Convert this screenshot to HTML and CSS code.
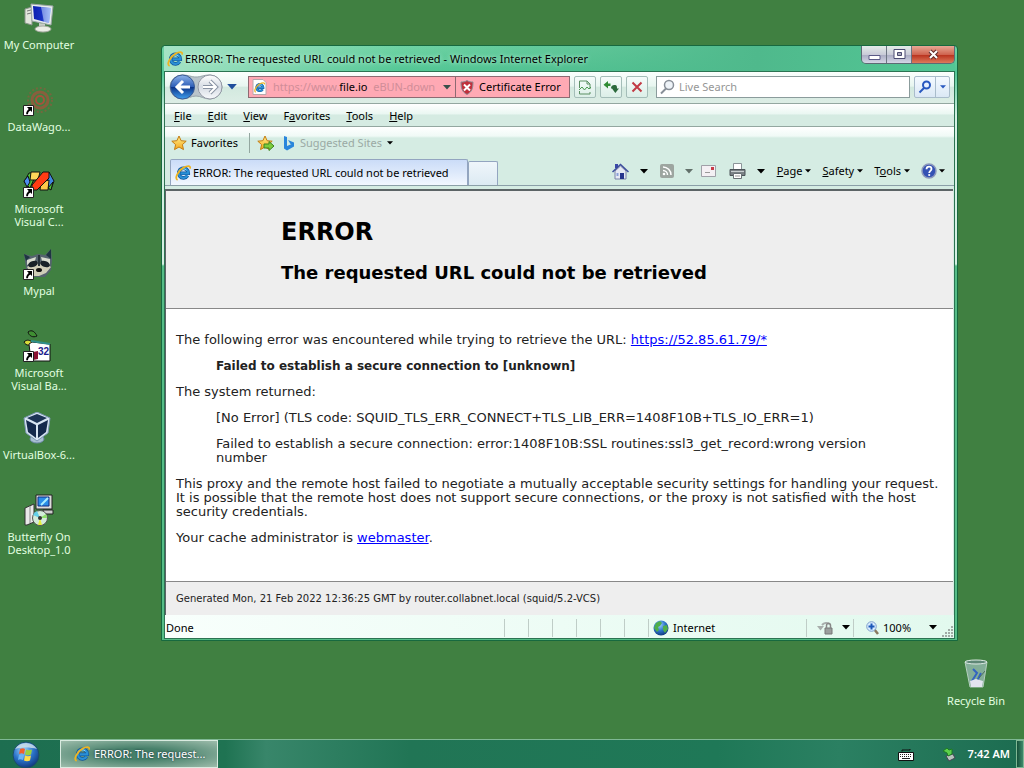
FILE: index.html
```html
<!DOCTYPE html>
<html lang="en">
<head>
    <meta charset="utf-8">
    <title>Desktop</title>
    <link rel="stylesheet" href="styles.css">
</head>
<body>
    <!-- shared icons -->
    <svg class="defs" width="0" height="0">
        <defs>
            <linearGradient id="blueBall" x1="0" y1="0" x2="0" y2="1">
                <stop offset="0" stop-color="#8fb4ea"/>
                <stop offset=".48" stop-color="#2f5fb8"/>
                <stop offset=".52" stop-color="#0c3489"/>
                <stop offset="1" stop-color="#3fa0ee"/>
            </linearGradient>
            <linearGradient id="greyBall" x1="0" y1="0" x2="0" y2="1">
                <stop offset="0" stop-color="#ffffff"/>
                <stop offset=".5" stop-color="#d6dce4"/>
                <stop offset="1" stop-color="#f8fafc"/>
            </linearGradient>
            <linearGradient id="screen" x1="0" y1="0" x2="1" y2="0">
                <stop offset="0" stop-color="#0a1fb0"/>
                <stop offset=".5" stop-color="#1730c4"/>
                <stop offset="1" stop-color="#8fb0fa"/>
            </linearGradient>
            <linearGradient id="starFill" x1="0" y1="0" x2="0" y2="1">
                <stop offset="0" stop-color="#fff08a"/>
                <stop offset="1" stop-color="#f5a81c"/>
            </linearGradient>
            <radialGradient id="globe" cx=".4" cy=".3" r=".8">
                <stop offset="0" stop-color="#9fd4ff"/>
                <stop offset=".5" stop-color="#2a72c8"/>
                <stop offset="1" stop-color="#0a2a6a"/>
            </radialGradient>
        </defs>
        <symbol id="ie" viewBox="0 0 16 16">
            <path d="M12.600 10.600a4.800 4.800 0 1 1 .7-2.300H5.500" fill="none" stroke="#11559c" stroke-width="3.600"/>
            <path d="M12.600 10.600a4.800 4.800 0 1 1 .7-2.300H5.500" fill="none" stroke="#2a90d6" stroke-width="2.200"/>
            <path d="M4.500 5.800a4.600 4.600 0 0 1 7-.6" fill="none" stroke="#8adcfa" stroke-width="1"/>
            <path d="M2.600 15C-.6 13.500 2.500 6 8.600 2.600 12 .7 15.800.2 15.200 3.600" fill="none" stroke="#eeb422" stroke-width="1.800"/>
        </symbol>
        <symbol id="shortcut" viewBox="0 0 11 11">
            <path d="M.5.5h10v10H.5z" fill="#fff" stroke="#222"/>
            <path d="M4 2h5v5L7.400 5.500C5.800 6.500 5 7.500 5 9.200H3.200C3 7 4 5.500 5.700 3.900z" fill="#000"/>
        </symbol>
        <symbol id="star" viewBox="0 0 16 16">
            <path d="M8 1l2.100 4.700 5.100.5-3.800 3.400 1.100 5L8 12l-4.500 2.600 1.100-5L.8 6.200l5.100-.5z" fill="url(#starFill)" stroke="#c47d12"/>
        </symbol>
        <symbol id="down" viewBox="0 0 8 5">
            <path d="M0 0h8L4 4.500z" fill="currentColor"/>
        </symbol>
    </svg>

    <main class="desktop">
        <div class="icons">
            <a class="icon" href="#">
                <svg width="32" height="32" viewBox="0 0 32 32">
                    <path d="M2 7l7-2v18l-7-2z" fill="#e2e6dc" stroke="#8b948b"/>
                    <path d="M4 9l4-1M4 12l4-1" stroke="#777"/>
                    <path d="M8 2l22 2-2 19-19-4z" fill="#e8ecec" stroke="#9aa5a5"/>
                    <path d="M10 4l18 2-2 15-15-4z" fill="url(#screen)"/>
                    <path d="M18 5l10 1-2 15-5-1z" fill="#b9cdf8" opacity=".6"/>
                    <path d="M16 21l6 1v4h-6z" fill="#c9cec8"/>
                    <ellipse cx="20" cy="27" rx="8" ry="3" fill="#eceee6" stroke="#a6aaa0"/>
                </svg>
                <span>My Computer</span>
            </a>
            <a class="icon" href="#">
                <svg width="32" height="32" viewBox="0 0 32 32">
                    <g fill="none" stroke="#a8503c">
                        <circle cx="17" cy="16" r="12" stroke-width="2" stroke-dasharray="2 2" opacity=".5"/>
                        <circle cx="17" cy="16" r="8" stroke-width="3" opacity=".7"/>
                        <circle cx="17" cy="16" r="4" stroke-width="2"/>
                    </g>
                    <use href="#shortcut" x="0" y="21" width="11" height="11"/>
                </svg>
                <span>DataWago...</span>
            </a>
            <a class="icon" href="#">
                <svg width="32" height="32" viewBox="0 0 32 32" stroke="#111">
                    <path d="M6 7h8l-3 6-4 9-6-6z" fill="#4fc43a"/>
                    <path d="M8 6h9l-2 8H7z" fill="#ffd55a"/>
                    <path d="M26 6l5 9-3 8-6-4z" fill="#3f86e0"/>
                    <path d="M18 16l8-2-1 10h-8z" fill="#ffc84a"/>
                    <path d="M25 22l5-6-2 8z" fill="#4fc43a"/>
                    <path d="M1 15l4-5 2 6-3 5z" fill="#4c8df0"/>
                    <path d="M9 19L20 6h6v6L14 24H9z" fill="#ff3c14"/>
                    <use href="#shortcut" x="0" y="21" width="11" height="11" stroke="none"/>
                </svg>
                <span>Microsoft<br>Visual C...</span>
            </a>
            <a class="icon" href="#">
                <svg width="32" height="32" viewBox="0 0 32 32">
                    <path d="M1 6l8 2 6-2 7 1 6-6 1 11-1 10-6 7H8l-5-9z" fill="#55646e"/>
                    <path d="M1 6l6 3-4 4zM28 1l-5 6 5 4z" fill="#1e3442"/>
                    <path d="M4 12l9-3-1 4-8 4zM27 11l-9-2 1 4 8 4z" fill="#d8dccf"/>
                    <path d="M4 19l6-4 4 2 2-8 2 8 4-2 6 4-5 6-7 3H9z" fill="#cfcdb8"/>
                    <ellipse cx="10" cy="16" rx="5" ry="3" fill="#182128" transform="rotate(-20 10 16)"/>
                    <ellipse cx="22" cy="16" rx="5" ry="3" fill="#182128" transform="rotate(20 22 16)"/>
                    <path d="M16 7v11" stroke="#26323a" stroke-width="2"/>
                    <ellipse cx="16" cy="22" rx="3" ry="2" fill="#111"/>
                    <use href="#shortcut" x="0" y="21" width="11" height="11"/>
                </svg>
                <span>Mypal</span>
            </a>
            <a class="icon" href="#">
                <svg width="32" height="32" viewBox="0 0 32 32">
                    <path d="M5 2c4-3 7 0 9 4-4 2-8 0-9-4z" fill="#3f8f32" stroke="#111"/>
                    <path d="M1 12c3-3 6-2 9 1-3 3-7 3-9-1z" fill="#d7dc3a" stroke="#111"/>
                    <path d="M6 14l3-2 18 2v17H8z" fill="#fff" stroke="#111"/>
                    <path d="M8 11l19 3" stroke="#2f8f8a" stroke-width="2"/>
                    <path d="M10 22l5-1v8l-5 1z" fill="#8b1030"/>
                    <text x="15" y="25" font-family="Liberation Sans" font-size="10" font-weight="700" fill="#1b1b8c">32</text>
                    <use href="#shortcut" x="0" y="21" width="11" height="11"/>
                </svg>
                <span>Microsoft<br>Visual Ba...</span>
            </a>
            <a class="icon" href="#">
                <svg width="32" height="32" viewBox="0 0 32 32">
                    <ellipse cx="14" cy="27" rx="7" ry="4" fill="#a9bfd2" stroke="#6a87a4"/>
                    <path d="M14 0l13 6-2 15-11 8L3 21 1 6z" fill="#d7e4f2" stroke="#7c97b4"/>
                    <path d="M14 2l10 4-10 5L4 6z" fill="#1d3456"/>
                    <path d="M3 8l10 5v13l-8-6zM25 8l-10 5v13l8-6z" fill="#14294c"/>
                </svg>
                <span>VirtualBox-6...</span>
            </a>
            <a class="icon" href="#">
                <svg width="32" height="32" viewBox="0 0 32 32">
                    <path d="M2 14l9-4v18l-7 3H2z" fill="#e9e9e9" stroke="#333"/>
                    <path d="M7 12v17" stroke="#888"/>
                    <path d="M13 1h16v14H13z" fill="#dcdcdc" stroke="#222"/>
                    <path d="M15 3h11v9H15z" fill="#2a8ee8" stroke="#112a80"/>
                    <path d="M18 11l7-7" stroke="#aef" stroke-width="2"/>
                    <path d="M20 16h10v4H20z" fill="#ccc" stroke="#222"/>
                    <circle cx="17" cy="24" r="7.500" fill="#d3ebd9" stroke="#555"/>
                    <path d="M17 24l-7-3a8 8 0 0 1 4-4z" fill="#63cfe8"/>
                    <path d="M17 24l2 7h-4z" fill="#e3ef3b"/>
                    <path d="M17 24l6-4 1 4z" fill="#8de06a"/>
                    <circle cx="17" cy="24" r="2" fill="#333"/>
                </svg>
                <span>Butterfly On<br>Desktop_1.0</span>
            </a>
        </div>

        <a class="icon recycle" href="#">
            <svg width="32" height="32" viewBox="0 0 32 32">
                <path d="M5 4h22l-4 25H10z" fill="#8fb7a8" stroke="#c9ddd4" opacity=".85"/>
                <path d="M13 11l4 4-5 8 8 1M21 15l-4 8" stroke="#3464c0" stroke-width="2" fill="none"/>
                <path d="M25 13l-6 7" stroke="#4d6f60"/>
                <path d="M10 23l6-2 7 2-1 6H11z" fill="#e2e4ee"/>
                <ellipse cx="16" cy="4" rx="11" ry="2" fill="#5e8776" stroke="#dfece6"/>
            </svg>
            <span>Recycle Bin</span>
        </a>

        <section class="window">
            <header class="titlebar">
                <svg width="16" height="16"><use href="#ie"/></svg>
                <span class="title">ERROR: The requested URL could not be retrieved - Windows Internet Explorer</span>
                <div class="controls">
                    <button class="ctl" aria-label="Minimize">
                        <svg width="13" height="11"><path d="M1 6.500h11v4H1z" fill="#fff" stroke="#5a5a86"/></svg>
                    </button>
                    <button class="ctl" aria-label="Maximize">
                        <svg width="13" height="11"><path d="M1 .5h11v9H1z" fill="#fff" stroke="#4a4a70"/><path d="M4.500 3.500h4v3h-4z" fill="#aab" stroke="#4a4a70"/></svg>
                    </button>
                    <button class="ctl close" aria-label="Close">
                        <svg width="13" height="11"><path d="M3 2l7 7M10 2L3 9" stroke="#5e2a2a" stroke-width="4"/><path d="M3 2l7 7M10 2L3 9" stroke="#fff" stroke-width="2"/></svg>
                    </button>
                </div>
            </header>

            <div class="frame">
                <div class="navbar">
                    <svg class="travel" width="54" height="28" viewBox="0 0 54 28">
                        <path d="M13 2C20 2 22 4 27 4S34 2 41 2a12 12 0 0 1 0 24c-6 0-9-3-14-3s-8 3-14 3a12 12 0 0 1 0-24z" fill="#b9c4ca" stroke="#98a4aa"/>
                        <circle cx="13.500" cy="14" r="12" fill="url(#blueBall)" stroke="#3a5a94"/>
                        <path d="M14 8l-6 6 6 6M8.500 14H21" fill="none" stroke="#fff" stroke-width="3"/>
                        <circle cx="41" cy="14" r="12" fill="url(#greyBall)" stroke="#9298a4"/>
                        <path d="M41 8l6 6-6 6M46 14H34" fill="none" stroke="#8a94a4" stroke-width="4"/>
                        <path d="M41 8l6 6-6 6M46 14H34" fill="none" stroke="#fff" stroke-width="2"/>
                    </svg>
                    <button class="plain history" aria-label="Recent pages"><svg width="10" height="6"><use href="#down"/></svg></button>
                    <div class="address">
                        <svg width="15" height="16" viewBox="0 0 15 16"><path d="M1 .5h10l3 3v12H1z" fill="#fff" stroke="#b8a8ac"/><use href="#ie" x="2" y="3" width="11" height="11"/></svg>
                        <div class="url" role="textbox" aria-label="Address" contenteditable="true" spellcheck="false">https://www.<b>file.io</b>&nbsp; eBUN-down</div>
                        <button class="plain" aria-label="Show address list"><svg width="8" height="5"><use href="#down"/></svg></button>
                    </div>
                    <button class="cert">
                        <svg width="14" height="15" viewBox="0 0 14 15">
                            <path d="M7 .5c2 1.500 4 1.500 6 1.500 0 6-1 10-6 12.500C2 12 1 8 1 2c2 0 4 0 6-1.500z" fill="#c0303c" stroke="#8d8d96"/>
                            <path d="M4 4.500l6 6M10 4.500l-6 6" stroke="#fff" stroke-width="2"/>
                        </svg>
                        Certificate Error
                    </button>
                    <div class="tools">
                        <button class="tool" aria-label="Compatibility view">
                            <svg width="14" height="15" viewBox="0 0 14 15"><path d="M1.500 8V1h7.500l3 3v5M1.500 11v3H12v-2M9 1v3h3" fill="none" stroke="#5b8f63"/><path d="M1 10l3-3 2.500 3L9 7l2 2 2-2" fill="none" stroke="#4a9a50"/></svg>
                        </button>
                        <button class="tool" aria-label="Refresh">
                            <svg width="16" height="15" viewBox="0 0 16 15"><path d="M5 1v2.500h2.500V6H5v2.500L.5 4.700z" fill="#2f8c34"/><path d="M8 8.500C8 6.500 9 5 11.500 5S14 6.500 14 8.500h2L12.300 13 9 8.500h2" fill="#2c6a3c"/></svg>
                        </button>
                        <button class="tool" aria-label="Stop">
                            <svg width="12" height="12"><path d="M1.500 1.500l9 9M10.500 1.500l-9 9" stroke="#c23a44" stroke-width="2"/></svg>
                        </button>
                    </div>
                    <label class="search">
                        <svg width="16" height="16" viewBox="0 0 16 16"><circle cx="9" cy="6" r="4.500" fill="#eef3f8" stroke="#888f98" stroke-width="1.500"/><path d="M6 9.500l-5 5" stroke="#888f98" stroke-width="2"/></svg>
                        <input type="text" placeholder="Live Search" aria-label="Live Search">
                    </label>
                    <div class="go">
                        <button aria-label="Search"><svg width="14" height="14" viewBox="0 0 14 14"><circle cx="8.500" cy="5" r="3.500" fill="#e6f0ff" stroke="#2858c0" stroke-width="2"/><path d="M6 8l-4.500 4.500" stroke="#2858c0" stroke-width="2"/></svg></button>
                        <button class="opts" aria-label="Search options"><svg width="6" height="4"><use href="#down"/></svg></button>
                    </div>
                </div>

                <nav class="menubar">
                    <button><u>F</u>ile</button>
                    <button><u>E</u>dit</button>
                    <button><u>V</u>iew</button>
                    <button>F<u>a</u>vorites</button>
                    <button><u>T</u>ools</button>
                    <button><u>H</u>elp</button>
                </nav>

                <div class="bars">
                    <div class="favbar">
                        <button class="fav"><svg width="16" height="16"><use href="#star"/></svg>Favorites</button>
                        <button class="add" aria-label="Add to Favorites Bar">
                            <svg width="18" height="16" viewBox="0 0 18 16"><use href="#star" width="16" height="16"/><path d="M7 9h5V6.500l5 4.500-5 4.500V13H7z" fill="#7ccc3c" stroke="#3c8420"/></svg>
                        </button>
                        <button class="suggested">
                            <svg width="12" height="15" viewBox="0 0 12 15"><path d="M1 0l3 1v9l7-3v3.500L4 14.500 1 12.500z" fill="#2a86dc"/><path d="M5 4l6 2.500V9L7.500 8z" fill="#2a86dc"/></svg>
                            <span>Suggested Sites</span>
                            <svg width="6" height="4"><use href="#down"/></svg>
                        </button>
                    </div>
                    <div class="tabrow">
                        <button class="tab"><svg width="16" height="16"><use href="#ie"/></svg>ERROR: The requested URL could not be retrieved</button>
                        <button class="newtab" aria-label="New Tab"></button>
                        <div class="commands">
                            <button class="cmd split" aria-label="Home">
                                <svg width="17" height="17" viewBox="0 0 17 17"><path d="M3 1h3v4H3z" fill="#3a48a8"/><path d="M3 8v8h11V8L8.500 3z" fill="#e6e9f4" stroke="#7a82a8"/><path d="M.5 9L8.500 1.500 16.500 9" fill="none" stroke="#3c4c9c" stroke-width="1.500"/><path d="M8 10h4v6H8z" fill="#26348c"/><path d="M4.500 10h2v3h-2z" fill="#8ba0d8"/></svg>
                                <svg width="8" height="5"><use href="#down"/></svg>
                            </button>
                            <button class="cmd split dim" aria-label="Feeds">
                                <svg width="14" height="14" viewBox="0 0 14 14"><rect width="14" height="14" rx="2" fill="#9da5a0"/><path d="M3 6.500A4.500 4.500 0 0 1 7.500 11M3 3a8 8 0 0 1 8 8" fill="none" stroke="#fff" stroke-width="1.500"/><circle cx="4" cy="10" r="1.300" fill="#fff"/></svg>
                                <svg width="8" height="5"><use href="#down"/></svg>
                            </button>
                            <button class="cmd mail" aria-label="Read Mail">
                                <svg width="15" height="12" viewBox="0 0 15 12"><path d="M.5.500h14v11H.5z" fill="#f4f0f4" stroke="#a0a0a8"/><path d="M10 2h3v3h-3z" fill="#c83a48"/><path d="M4 7.500h5" stroke="#999"/></svg>
                            </button>
                            <button class="cmd split" aria-label="Print">
                                <svg width="17" height="16" viewBox="0 0 17 16"><path d="M4.500.5h8v6h-8z" fill="#fff" stroke="#8b9498"/><path d="M1 6.500h15v6H1z" fill="#7b8286" stroke="#4c5458"/><path d="M2 8.500h13" stroke="#c8cfd0"/><path d="M4.500 10.500h8v5h-8z" fill="#fff" stroke="#6a7276"/><path d="M6 13h5" stroke="#999"/></svg>
                                <svg width="8" height="5"><use href="#down"/></svg>
                            </button>
                            <button class="cmd word"><span><u>P</u>age</span><svg width="6" height="4"><use href="#down"/></svg></button>
                            <button class="cmd word"><span><u>S</u>afety</span><svg width="6" height="4"><use href="#down"/></svg></button>
                            <button class="cmd word"><span>T<u>o</u>ols</span><svg width="6" height="4"><use href="#down"/></svg></button>
                            <button class="cmd help" aria-label="Help">
                                <svg width="16" height="16" viewBox="0 0 16 16"><circle cx="8" cy="8" r="7" fill="#3452b4" stroke="#8c98bc" stroke-width="1.500"/><path d="M5.500 6.200C5.600 2.800 10.500 3 10.500 6 10.500 7.800 8.200 8 8.200 10" fill="none" stroke="#fff" stroke-width="1.800"/><circle cx="8.200" cy="12" r="1.100" fill="#fff"/></svg>
                                <svg width="6" height="4"><use href="#down"/></svg>
                            </button>
                        </div>
                    </div>
                </div>

                <article class="page">
                    <div class="titles">
                        <h1>ERROR</h1>
                        <h2>The requested URL could not be retrieved</h2>
                    </div>
                    <div class="content">
                        <p>The following error was encountered while trying to retrieve the URL: <a href="#">https://52.85.61.79/*</a></p>
                        <blockquote><b>Failed to establish a secure connection to [unknown]</b></blockquote>
                        <p>The system returned:</p>
                        <blockquote>[No Error] (TLS code: SQUID_TLS_ERR_CONNECT+TLS_LIB_ERR=1408F10B+TLS_IO_ERR=1)</blockquote>
                        <blockquote>Failed to establish a secure connection: error:1408F10B:SSL routines:ssl3_get_record:wrong version number</blockquote>
                        <p>This proxy and the remote host failed to negotiate a mutually acceptable security settings for handling your request. It is possible that the remote host does not support secure connections, or the proxy is not satisfied with the host security credentials.</p>
                        <p>Your cache administrator is <a href="#">webmaster</a>.</p>
                    </div>
                    <div class="footer">Generated Mon, 21 Feb 2022 12:36:25 GMT by router.collabnet.local (squid/5.2-VCS)</div>
                </article>

                <footer class="status">
                    <span class="done">Done</span>
                    <span class="cell"></span>
                    <span class="cell"></span>
                    <span class="cell"></span>
                    <span class="cell"></span>
                    <span class="cell"></span>
                    <span class="cell"></span>
                    <span class="zone">
                        <svg width="16" height="16" viewBox="0 0 16 16"><circle cx="8" cy="8" r="7.500" fill="url(#globe)"/><path d="M3 3l4-2 2 2-2 3-2 1 1 3-2 2-3-4zM10 6l4-1 1 4-3 4-2-3z" fill="#4fae4a"/></svg>
                        Internet
                    </span>
                    <button class="protect" aria-label="Protected mode">
                        <svg width="17" height="15" viewBox="0 0 17 15"><path d="M5 5a6 6 0 0 1 8-1" fill="none" stroke="#a8aeac" stroke-width="2"/><path d="M0 6h7L3.500 10.500z" fill="#a8aeac"/><path d="M8 8h7v6H8z" fill="#9a9f9d" stroke="#777"/><path d="M9.500 8V5.500a2 2 0 0 1 4 0V8" fill="none" stroke="#888" stroke-width="1.500"/></svg>
                        <svg width="8" height="5"><use href="#down"/></svg>
                    </button>
                    <button class="zoom">
                        <svg width="13" height="14" viewBox="0 0 13 14"><path d="M8 8l4 5" stroke="#8a7a60" stroke-width="2.500"/><circle cx="5.500" cy="5.500" r="4.800" fill="#d8ecff" stroke="#7fa0cc"/><path d="M5.500 2.500v6M2.500 5.500h6" stroke="#1c58b8" stroke-width="2"/></svg>
                        <span>100%</span>
                        <svg width="8" height="5"><use href="#down"/></svg>
                    </button>
                    <svg class="grip" width="12" height="12" viewBox="0 0 12 12"><path d="M9 1h2M9 4h2M9 7h2M9 10h2M6 4h2M6 7h2M6 10h2M3 7h2M3 10h2M0 10h2" stroke="#a0aaa6" stroke-width="2"/></svg>
                </footer>
            </div>
        </section>
    </main>

    <footer class="taskbar">
        <button class="start" aria-label="Start">
            <svg width="28" height="28" viewBox="0 0 28 28">
                <circle cx="14" cy="15" r="13" fill="url(#globe)" stroke="#1d4f66"/>
                <path d="M3 9a13 13 0 0 1 22 0C18 7 10 7 3 9z" fill="#d4e4ea" opacity=".8"/>
                <path d="M8 9c2-1 4-1 5 0l-1 5c-2-1-3-1-5 0z" fill="#f0602c"/>
                <path d="M14 9.500c2 1 4 1 6 0l-1 5c-2 1-4 1-6 0z" fill="#9cd03c"/>
                <path d="M7 15c2-1 3-1 5 0l-1 5c-2-1-4-1-5 0z" fill="#6cb4f4"/>
                <path d="M13 15.500c2 1 4 1 6 0l-1 5c-2 1-4 1-6 0z" fill="#ffdc48"/>
            </svg>
        </button>
        <button class="task"><svg width="16" height="16"><use href="#ie"/></svg>ERROR: The request...</button>
        <div class="tray">
            <svg width="16" height="13" viewBox="0 0 16 13"><path d="M4 3.500V2h8V1" fill="none" stroke="#111"/><path d="M.5 4.500h15v8H.5z" fill="#fff" stroke="#111"/><path d="M2 6.500h12M2 8.500h12" stroke="#222" stroke-dasharray="1 1"/><path d="M4 10.500h8" stroke="#222"/></svg>
            <svg class="eject" width="14" height="15" viewBox="0 0 14 15"><path d="M4 9l7-2 2 4-6 3z" fill="#b8c4bc" stroke="#445"/><path d="M1 4l4-3 2 2 3-1v5L6 9 5 6z" fill="#5cd04a" stroke="#1d7a24"/></svg>
            <time>7:42 AM</time>
            <button class="peek" aria-label="Show desktop"></button>
        </div>
    </footer>
</body>
</html>
```
FILE: styles.css
```css
* {
    box-sizing: border-box;
}

body {
    margin: 0;
    height: 100vh;
    display: flex;
    flex-direction: column;
    overflow: hidden;
    background: #408041;
    color: #000;
    font: 11px/14px "Noto Sans", "Open Sans", sans-serif;
}

button {
    margin: 0;
    padding: 0;
    border: 0;
    background: none;
    color: inherit;
    font: inherit;
}

svg {
    display: block;
    flex: none;
}

.defs {
    position: absolute;
}

/* desktop */
.desktop {
    position: relative;
    flex: 1;
}

.icons {
    width: 78px;
}

.icon {
    display: flex;
    flex-direction: column;
    align-items: center;
    height: 82px;
    padding-top: 2px;
    gap: 4px;
    color: #e2ffe0;
    line-height: 13px;
    text-align: center;
    text-decoration: none;
    white-space: nowrap;
}

.recycle {
    position: absolute;
    right: 8px;
    bottom: 1px;
    width: 80px;
}

/* browser window */
.window {
    position: absolute;
    left: 161px;
    right: 66px;
    top: 45px;
    bottom: 98px;
    display: flex;
    flex-direction: column;
    padding: 0 2px 1px;
    border: 1px solid #17693f;
    border-radius: 4px 4px 0 0;
    background: linear-gradient(#6fd3a4, #52c795 26px, #d5f0e3 70px, #d5f0e3 218px, #55bd87 220px);
}

.titlebar {
    display: flex;
    align-items: center;
    height: 25px;
    padding-left: 3px;
    gap: 2px;
    background: linear-gradient(90deg, #a5e3c5, transparent 30%, #4fb98c 75%, #52c795);
}

.title {
    flex: 1;
    white-space: nowrap;
    text-shadow: 0 0 4px #d4f7e6;
}

.controls {
    display: flex;
    align-self: flex-start;
    height: 18px;
    border: 1px solid #5c6a74;
    border-top: 0;
    border-radius: 0 0 5px 5px;
    overflow: hidden;
}

.ctl {
    display: flex;
    align-items: center;
    justify-content: center;
    width: 25px;
    border-right: 1px solid #6c7482;
    background: linear-gradient(#e4ece8, #c9cbd8 50%, #a9abc2 52%, #d4d6e6);
}

.close {
    width: 42px;
    border-right: 0;
    background: linear-gradient(#e8a894, #cf6450 50%, #b8301c 52%, #dd7a5c);
}

.frame {
    flex: 1;
    display: flex;
    flex-direction: column;
    border: 1px solid #2c7352;
    background: #d5ece3;
}

.navbar {
    display: flex;
    align-items: center;
    height: 32px;
    padding: 0 4px 1px;
    border-bottom: 1px solid #93a7a0;
    background: linear-gradient(#fbfffd, #e8f6f0 45%, #d3e9df 50%, #dcede5);
}

.plain {
    display: flex;
    align-items: center;
}

.history {
    padding: 0 11px 0 4px;
    color: #1f4e9c;
}

.address,
.cert {
    display: flex;
    align-items: center;
    height: 22px;
    border: 1px solid #8d6a72;
    background: #ffa9b4;
}

.address {
    width: 208px;
    padding: 0 4px 0 3px;
    gap: 6px;
    color: #37504a;
}

.url {
    flex: 1;
    color: #d08d98;
    white-space: nowrap;
    outline: 0;
}

.url b {
    color: #000;
    font-weight: 400;
}

.cert {
    width: 114px;
    padding-left: 4px;
    gap: 5px;
    border-left: 0;
    white-space: nowrap;
}

.tools {
    display: flex;
    gap: 4px;
    margin: 0 8px 0 4px;
}

.tool {
    display: flex;
    align-items: center;
    justify-content: center;
    width: 22px;
    height: 22px;
    border: 1px solid #a4bdb8;
    border-radius: 2px;
    background: linear-gradient(#f6fcfa, #dcefe8);
}

.search {
    flex: 1;
    display: flex;
    align-items: center;
    height: 22px;
    padding-left: 3px;
    gap: 3px;
    border: 1px solid #8b9c9c;
    background: #fff;
}

.search input {
    flex: 1;
    min-width: 0;
    padding: 0;
    border: 0;
    outline: 0;
    background: none;
    font: inherit;
}

.search input::placeholder {
    color: #969696;
}

.go {
    display: flex;
    height: 22px;
    margin-left: 4px;
    border: 1px solid #a9bccb;
    border-radius: 2px;
    background: linear-gradient(#f4faff, #dbe8f5);
    color: #2858c0;
}

.go button {
    display: flex;
    align-items: center;
    justify-content: center;
    width: 20px;
}

.go .opts {
    width: 14px;
    border-left: 1px solid #a9bccb;
}

.menubar {
    display: flex;
    align-items: center;
    height: 23px;
    padding: 2px 0 0 9px;
    gap: 16px;
    border-bottom: 1px solid #93a7a0;
    background: linear-gradient(#fff, #eaf7f2 45%, #d5ebe2 50%);
}

.bars {
    padding-bottom: 3px;
    background: linear-gradient(#fff, #f0faf6 9px, #d5ece3 11px);
}

.favbar {
    display: flex;
    align-items: center;
    height: 32px;
    padding-left: 6px;
}

.favbar button {
    display: flex;
    align-items: center;
    height: 20px;
    gap: 4px;
}

.fav {
    padding-right: 11px;
}

.favbar .add {
    padding-left: 7px;
    border-left: 1px solid #93a7a0;
}

.favbar .suggested {
    margin-left: 8px;
    gap: 5px;
}

.suggested span {
    color: #9aa9a3;
}

.tabrow {
    display: flex;
    align-items: flex-end;
    height: 27px;
    padding-left: 5px;
    border-bottom: 1px solid #8b9fa8;
}

.tab,
.newtab {
    border: 1px solid #93a5c0;
    border-bottom: 0;
    border-radius: 2px 2px 0 0;
}

.tab {
    display: flex;
    align-items: center;
    width: 298px;
    height: 26px;
    padding-left: 4px;
    gap: 2px;
    background: linear-gradient(#cbdcf8, #dde9fb 50%, #f2f7ff);
    white-space: nowrap;
}

.newtab {
    width: 30px;
    height: 24px;
    background: linear-gradient(#eff6fb, #dceaf2);
}

.commands {
    display: flex;
    align-items: center;
    height: 28px;
    margin-left: auto;
    padding-right: 9px;
}

.cmd {
    display: flex;
    align-items: center;
}

.split {
    gap: 11px;
    padding-right: 12px;
}

.dim svg + svg {
    color: #62706a;
}

.dim {
    padding-right: 8px;
}

.mail {
    padding-right: 13px;
}

.word {
    gap: 3px;
    padding-right: 11px;
}

.help {
    gap: 2px;
}

/* error page */
.page {
    flex: 1;
    display: flex;
    flex-direction: column;
    margin-right: 1px;
    border-top: 2px solid #5c6466;
    border-left: 1px solid #5c6466;
    background: #fff;
    color: #222;
    font: 13px/14px Verdana, "DejaVu Sans", sans-serif;
}

.titles {
    padding: 26px 10px 23px 115px;
    border-bottom: 1px solid #888;
    background: #eee;
    color: #000;
}

.titles h1 {
    margin: 0 0 14px;
    font-size: 24px;
    line-height: 30px;
}

.titles h2 {
    margin: 0;
    font-size: 18px;
    line-height: 24px;
}

.content {
    flex: 1;
    padding: 24px 10px 0;
}

.content p {
    margin: 0 0 12px;
}

.content blockquote {
    margin: 0 40px 12px;
}

.content b {
    font-size: 12px;
}

.content a {
    color: #00f;
}

.footer {
    padding: 10px 10px 9px;
    border-top: 1px solid #888;
    background: #eee;
    font-size: 10px;
}

.status {
    display: flex;
    align-items: center;
    height: 23px;
    padding: 2px 0 0 1px;
    background: linear-gradient(90deg, #f8fffc, #e2f9ee);
}

.done {
    flex: 1;
}

.cell {
    width: 24px;
    height: 18px;
    border-left: 1px solid #bfcdc7;
}

.zone,
.protect,
.zoom {
    display: flex;
    align-items: center;
    height: 18px;
    border-left: 1px solid #bfcdc7;
}

.zone {
    width: 158px;
    padding-left: 4px;
    gap: 4px;
}

.protect {
    width: 47px;
    padding-left: 10px;
    gap: 8px;
}

.zoom {
    padding-left: 12px;
    gap: 4px;
}

.zoom span {
    width: 42px;
    text-align: left;
}

.grip {
    align-self: flex-end;
    margin-left: 5px;
}

/* taskbar */
.taskbar {
    display: flex;
    height: 29px;
    border-top: 1px solid #7fb894;
    background: linear-gradient(90deg, #1d6e50, #1f7352 22%, #38866a 26%, #217555 40%, #1f7857 70%, #2b8062 82%, #1c6c50);
    color: #fff;
}

.start {
    width: 52px;
}

.start svg {
    margin: 0 auto;
}

.task {
    display: flex;
    align-items: center;
    width: 158px;
    margin-left: 8px;
    padding-left: 13px;
    gap: 4px;
    border: 1px solid #d9ebe0;
    background: radial-gradient(ellipse at center, #46806a 30%, #9dbcab);
    text-shadow: 0 0 2px #123;
    white-space: nowrap;
}

.tray {
    display: flex;
    align-items: center;
    margin-left: auto;
}

.eject {
    margin: 0 12px 0 28px;
}

time {
    font-weight: 600;
}

.peek {
    width: 8px;
    height: 28px;
    margin-left: 6px;
    border: 1px solid #7fb894;
    background: linear-gradient(90deg, #144f38, #3f8a6c);
}
```
